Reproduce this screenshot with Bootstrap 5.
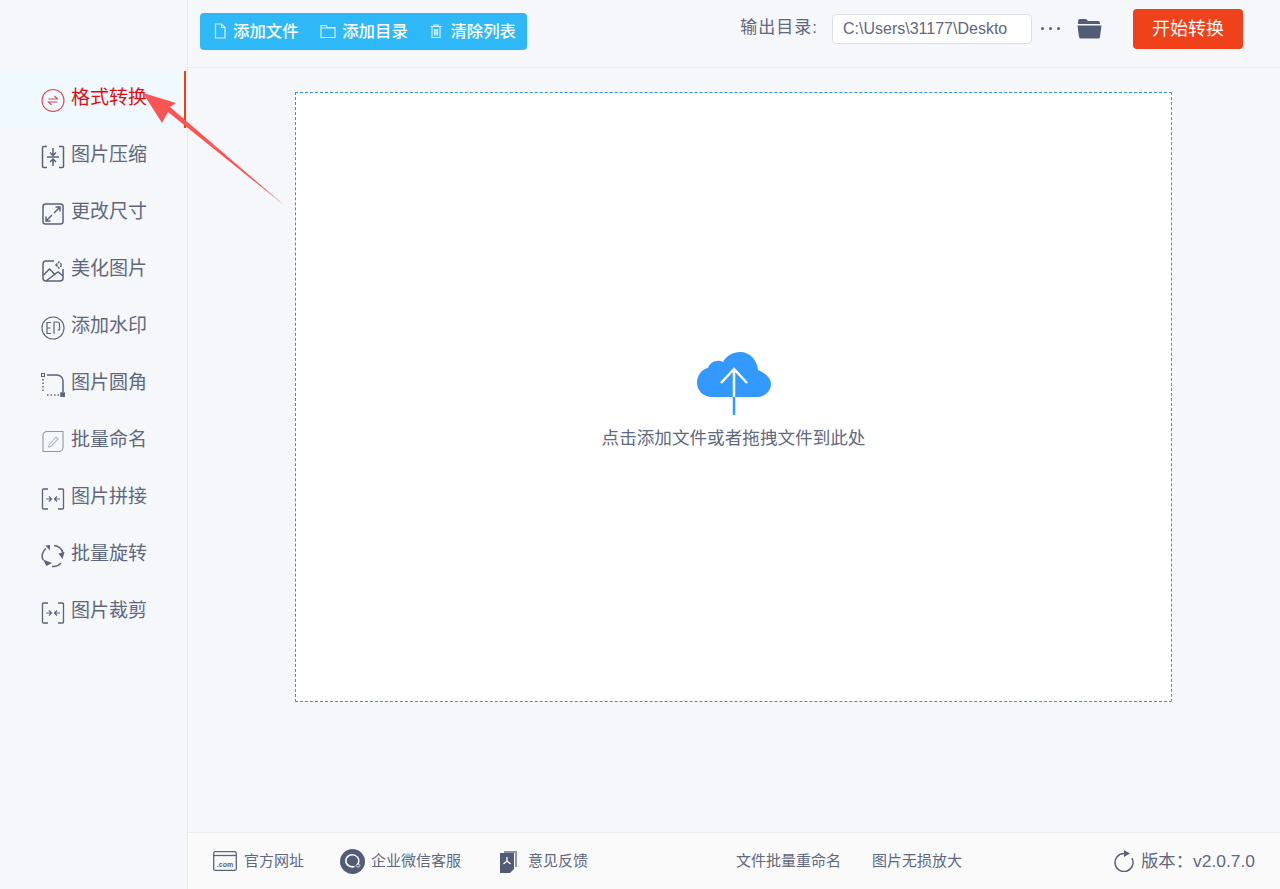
<!DOCTYPE html>
<html lang="zh-CN">
<head>
    <meta charset="UTF-8">
    <title>图片转换</title>
    <link href="https://cdn.jsdelivr.net/npm/bootstrap@5.3.3/dist/css/bootstrap.min.css" rel="stylesheet">
    <style>
        body { font-family: "Liberation Sans", "Noto Sans CJK SC", sans-serif; background: #f5f7fa; color: #5f687d; overflow: hidden; }
        .app-shell { height: 889px; position: relative; }
        .side-menu { width: 188px; border-right: 1px solid #e9ebf0; padding-top: 71px; flex-shrink: 0; }
        .menu-item { height: 57px; margin-right: 1px; padding: 0 0 0 41px; gap: 6px; font-size: 19px; color: #5f687d; border-right: 2px solid transparent; }
        .menu-item:hover { color: #5f687d; }
        .menu-item span { margin-top: -2px; }
        .menu-item.active-item, .menu-item.active-item:hover { background: #f0f9ff; color: #dc0f0f; border-right-color: #f0400f; }
        .menu-item svg { width: 24px; height: 24px; fill: none; stroke: #5a6378; stroke-width: 1.5; flex-shrink: 0; }
        .top-bar { height: 68px; border-bottom: 1px solid #e9ebf0; padding: 0 37px 0 12px; }
        .tool-group { background: #2fb8f8; border-radius: 4px; height: 37px; width: 327px; padding: 0 11px 0 13px; margin-top: -5px; }
        .tool-btn { color: #fff; font-size: 16.4px; font-weight: 500; padding: 0; border: 0; gap: 6px; line-height: 1; }
        .tool-btn:hover, .tool-btn:active { color: #fff; }
        .tool-btn svg { width: 14px; height: 16px; fill: none; stroke: #d8f2ff; stroke-width: 1.2; }
        .out-label { font-size: 17px; letter-spacing: 1px; margin-right: 14px; margin-top: -11px; }
        .out-path { width: 200px; height: 30px; font-size: 16px; padding: 0 10px; color: #5f687d; border-color: #dcdfe6; border-radius: 4px; background: #fff; margin-top: -9px; }
        .more-dots { width: 19px; margin-left: 9px; margin-right: 17px; margin-top: -11px; gap: 5px; }
        .more-dots i { width: 3px; height: 3px; border-radius: 50%; background: #5a6378; display: block; flex-shrink: 0; }
        .folder-icon { width: 25px; height: 22px; margin-right: 31px; margin-top: -12px; }
        .start-btn { width: 110px; height: 40px; background: #f0421a; border: 0; color: #fff; font-size: 18px; border-radius: 4px; padding: 0; margin-top: -9px; }
        .start-btn:hover, .start-btn:active { background: #f0421a !important; color: #fff !important; }
        .work-area { padding: 24px 108px 0 107px; }
        .drop-box { height: 610px; background: #fff; border: 1px dashed #2f8fe0; border-right-color: #5a8f9a; border-bottom-color: #5f8f80; padding-top: 16px; }
        .drop-text { font-size: 17.6px; margin-top: 11px; color: #5f6980; line-height: 1.3; }
        .cloud-icon { width: 74px; height: 64px; margin-top: -9px; }
        .bottom-bar { height: 57px; background: #fafafb; border-top: 1px solid #eceef2; padding: 0 25px; font-size: 15px; margin-top: auto; }
        .foot-link { gap: 7px; color: #5f687d; text-decoration: none; }
        .foot-link svg { flex-shrink: 0; }
        .version-box { font-size: 17.4px; gap: 7px; }
        .arrow-mark { position: absolute; left: 0; top: 0; width: 300px; height: 220px; pointer-events: none; }
    </style>
</head>
<body>
<div class="app-shell d-flex">
    <div class="side-menu">
        <nav class="nav flex-column">
            <a class="nav-link menu-item active-item d-flex align-items-center" href="#">
                <svg viewBox="0 0 24 24" style="stroke:#e0494c"><circle cx="12" cy="12.5" r="11" stroke-width="1.1"/><path d="M7.5 11h9l-3-3M16.5 14h-9l3 3" stroke-width="1.1"/></svg>
                <span>格式转换</span>
            </a>
            <a class="nav-link menu-item d-flex align-items-center" href="#">
                <svg viewBox="0 0 24 24"><path d="M6 1.500H2.500a1 1 0 0 0-1 1v19a1 1 0 0 0 1 1H6M18 1.500h3.500a1 1 0 0 1 1 1v19a1 1 0 0 1-1 1H18"/><path d="M6 12h12M12 3v7M12 21v-7M9 7.500l3 3 3-3M9 17l3-3 3 3"/></svg>
                <span>图片压缩</span>
            </a>
            <a class="nav-link menu-item d-flex align-items-center" href="#">
                <svg viewBox="0 0 24 24"><rect x="2" y="2" width="20" height="20" rx="2.500"/><path d="M13 11l6-6M14.500 5H19v4.500M11 13l-6 6M5 14.500V19h4.500"/></svg>
                <span>更改尺寸</span>
            </a>
            <a class="nav-link menu-item d-flex align-items-center" href="#">
                <svg viewBox="0 0 24 24"><path d="M13 2H5a3 3 0 0 0-3 3v14a3 3 0 0 0 3 3h14a3 3 0 0 0 3-3V10"/><path d="M2.500 16l6-6 6 6 M5 22l9-7 3-2 5 4"/><path d="M15 6l3-3 3 3-3 3z" stroke-dasharray="2 1"/></svg>
                <span>美化图片</span>
            </a>
            <a class="nav-link menu-item d-flex align-items-center" href="#">
                <svg viewBox="0 0 24 24"><circle cx="12" cy="12" r="11" stroke-width="1.1"/><path d="M10 6.500H6v11h4M6 12h3.500M13 6h3.500a2 2 0 0 1 2 2v6h-2M13 6v12" stroke-width="1.200"/></svg>
                <span>添加水印</span>
            </a>
            <a class="nav-link menu-item d-flex align-items-center" href="#">
                <svg viewBox="0 0 24 24"><path d="M6 2h10a6 6 0 0 1 6 6v11" stroke-width="1.500"/><path d="M2 6v13M6 22h13" stroke-width="1.500" stroke-dasharray="1.500 2"/><rect x="0.500" y="0.500" width="3" height="3" stroke-width="1.100"/><rect x="20" y="20" width="3.200" height="3.200" fill="#5a6378"/></svg>
                <span>图片圆角</span>
            </a>
            <a class="nav-link menu-item d-flex align-items-center" href="#">
                <svg viewBox="0 0 24 24" style="stroke:#8f97a8"><path d="M6 1.500h16v16a4 4 0 0 1-4 4H2V5.500a4 4 0 0 1 4-4z" stroke-width="1.100"/><path d="M8 15l7-8 2 2-7 7.500-2.500.5z" stroke="#b4bac6" stroke-width="1.100"/></svg>
                <span>批量命名</span>
            </a>
            <a class="nav-link menu-item d-flex align-items-center" href="#">
                <svg viewBox="0 0 24 24"><path d="M7 2H2.500a1 1 0 0 0-1 1v18a1 1 0 0 0 1 1H7M17 2h4.500a1 1 0 0 1 1 1v18a1 1 0 0 1-1 1H17M10 2h.01M14 2h.01M10 22h.01M14 22h.01" stroke-width="1.300"/><path d="M5 12h5.500M8 9.500l2.500 2.500-2.500 2.500M19 12h-5.500M16 9.500L13.500 12l2.500 2.500" stroke-width="1.200"/></svg>
                <span>图片拼接</span>
            </a>
            <a class="nav-link menu-item d-flex align-items-center" href="#">
                <svg viewBox="0 0 24 24"><path d="M2 16A10.500 10.500 0 0 1 5 4.500M13 1.500A10.500 10.500 0 0 1 22 9M20 19A10.500 10.500 0 0 1 11 22.500" stroke-width="1.500"/><path d="M4.500 1.500L9 1v5.500zM17.500 9.500L23.500 8l-2 7zM2 15.500l9 3.500-5.500 3z" fill="#5a6378" stroke="none"/></svg>
                <span>批量旋转</span>
            </a>
            <a class="nav-link menu-item d-flex align-items-center" href="#">
                <svg viewBox="0 0 24 24"><path d="M7 2H2.500a1 1 0 0 0-1 1v18a1 1 0 0 0 1 1H7M17 2h4.500a1 1 0 0 1 1 1v18a1 1 0 0 1-1 1H17M10 2h.01M14 2h.01M10 22h.01M14 22h.01" stroke-width="1.300"/><path d="M5 12h5.500M8 9.500l2.500 2.500-2.500 2.500M19 12h-5.500M16 9.500L13.500 12l2.500 2.500" stroke-width="1.200"/></svg>
                <span>图片裁剪</span>
            </a>
        </nav>
    </div>

    <div class="d-flex flex-column flex-grow-1">
        <div class="top-bar d-flex align-items-center">
            <div class="tool-group d-flex align-items-center justify-content-between">
                <button type="button" class="btn tool-btn d-flex align-items-center">
                    <svg viewBox="0 0 14 16"><path d="M2.500 1h6l3.500 3.500V15h-9.500zM8.500 1v3.500H12"/></svg>添加文件
                </button>
                <button type="button" class="btn tool-btn d-flex align-items-center">
                    <svg viewBox="0 0 16 16" style="width:16px"><path d="M1 2.500h5l1.500 2H15v10H1zM1 5h14"/></svg>添加目录
                </button>
                <button type="button" class="btn tool-btn d-flex align-items-center">
                    <svg viewBox="0 0 14 16" style="margin-right:1px"><path d="M1.500 3.500h11M5 3.500V2h4v1.500M3 3.500v11h8v-11M5.500 6v6.500M7 6v6.500M8.500 6v6.500"/></svg>清除列表
                </button>
            </div>
            <div class="out-label ms-auto">输出目录:</div>
            <input type="text" class="form-control out-path" value="C:\Users\31177\Deskto">
            <div class="more-dots d-flex"><i></i><i></i><i></i></div>
            <svg class="folder-icon" viewBox="0 0 25 22"><path d="M1 4a2 2 0 0 1 2-2h6l2 2h10a2 2 0 0 1 2 2v1H1zM0.500 8.500h24L23 20a2 2 0 0 1-2 1.500H4A2 2 0 0 1 2 20z" fill="#525c75"/></svg>
            <button type="button" class="btn start-btn">开始转换</button>
        </div>

        <div class="work-area">
            <div class="drop-box d-flex flex-column align-items-center justify-content-center">
                <svg class="cloud-icon" viewBox="0 0 74 64"><path d="M15 45C6 45 0 38 0 31 0 23 5 17 11 16 13 10 20 7 26 10 29 4 36 0 43 0 53 0 60 8 61 18 68 21 74 26 74 32 74 39 68 45 59 45z" fill="#3399ff"/><path d="M37 45V17M24 31l13-14 13 14" fill="none" stroke="#fff" stroke-width="2.500"/><path d="M37 45v18" stroke="#3399ff" stroke-width="2.500"/></svg>
                <div class="drop-text">点击添加文件或者拖拽文件到此处</div>
            </div>
        </div>

        <div class="bottom-bar d-flex align-items-center">
            <a class="foot-link d-flex align-items-center" href="#">
                <svg width="24" height="20" viewBox="0 0 24 20" fill="none" stroke="#5a6378"><rect x="0.700" y="0.700" width="22.600" height="18.600" rx="1.500" stroke-width="1.300"/><path d="M1 4.500h22" stroke-width="1.300"/><text x="12" y="15.500" font-size="7" font-weight="700" text-anchor="middle" fill="#5a6378" stroke="none" font-family="Liberation Sans">.com</text></svg>
                官方网址
            </a>
            <a class="foot-link d-flex align-items-center" href="#" style="margin-left:36px;gap:6px">
                <svg width="25" height="25" viewBox="0 0 25 25"><circle cx="12.500" cy="12.500" r="12.500" fill="#525c75"/><path d="M17.500 15.500a6.500 6 0 1 0-3 2" fill="none" stroke="#fff" stroke-width="1.500"/><path d="M16 16.500l2 2 2-2-2-2z" fill="none" stroke="#fff"/></svg>
                企业微信客服
            </a>
            <a class="foot-link d-flex align-items-center" href="#" style="margin-left:38px;gap:10px">
                <svg width="19" height="23" viewBox="0 0 19 23"><path d="M15 1h3v16h-2V3H5V1z" fill="#8d95a6"/><path d="M1 3h14v16l-4 4H1z" fill="#525c75"/><path d="M8 7v4M8 11l-3.500 3M8 11l3.500 3" stroke="#fff" stroke-width="1.300"/></svg>
                意见反馈
            </a>
            <a class="foot-link" href="#" style="margin-left:148px">文件批量重命名</a>
            <a class="foot-link" href="#" style="margin-left:31px">图片无损放大</a>
            <div class="version-box ms-auto d-flex align-items-center">
                <svg width="20" height="22" viewBox="0 0 20 22" fill="none"><path d="M10 3.500A9 9 0 1 0 17.800 8" stroke="#5a6378" stroke-width="1.500"/><path d="M10 0l6 3.500-6 3.500z" fill="#5a6378"/></svg>
                <span>版本：v2.0.7.0</span>
            </div>
        </div>
    </div>

    <svg class="arrow-mark" viewBox="0 0 300 220"><polygon points="143,93 176,103 170,107 285,206 168,112 162,123" fill="#fb5455"/></svg>
</div>
<script src="https://cdn.jsdelivr.net/npm/bootstrap@5.3.3/dist/js/bootstrap.bundle.min.js"></script>
</body>
</html>
